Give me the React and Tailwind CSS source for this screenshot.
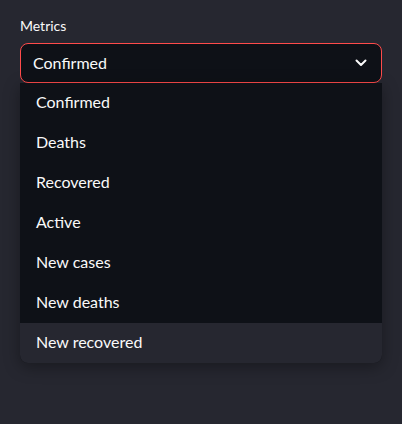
import React from "react";

const options = ["Confirmed", "Deaths", "Recovered", "Active", "New cases", "New deaths", "New recovered"];

export default function App() {
  return (
    <div className="w-[402px] h-[424px] bg-[#262730] px-5 pt-[17px]" style={{ fontFamily: "Lato, 'Noto Sans', sans-serif" }}>
      <div className="text-[14px] leading-[18px] text-[#fafafa] mb-2">Metrics</div>
      <div className="h-[40px] rounded-lg border border-[#ff4b4b] bg-[#0e1117] flex items-center justify-between pl-3 pr-[14px]">
        <span className="text-[16px] leading-[20px] text-[#fafafa] -mt-px">Confirmed</span>
        <svg width="12" height="8" viewBox="0 0 12 8" fill="none">
          <path d="M1.5 1.5L6 6L10.5 1.5" stroke="#fafafa" strokeWidth="2" strokeLinecap="round" strokeLinejoin="round" />
        </svg>
      </div>
      <div className="rounded-b-lg bg-[#0e1117] shadow-[0_4px_16px_rgba(0,0,0,0.35)] overflow-hidden">
        {options.map((o, i) => (
          <div key={o} className={`h-[40px] flex items-center pl-4 pb-[2px] text-[16px] text-[#fafafa] ${i === options.length - 1 ? "bg-[#262730]" : ""}`}>
            {o}
          </div>
        ))}
      </div>
    </div>
  );
}
